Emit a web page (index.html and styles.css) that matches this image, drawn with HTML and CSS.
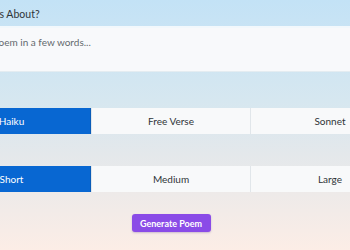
FILE: index.html
```html
<!DOCTYPE html>
<html lang="en">
<head>
    <meta charset="UTF-8">
    <title>Poem Generator</title>
    <link rel="stylesheet" href="styles.css">
</head>
<body>
<div class="page">
    <h2 class="title">What Is This About?</h2>
    <textarea class="topic" placeholder="Describe a poem in a few words..."></textarea>

    <p class="label">Style</p>
    <div class="group">
        <button class="opt active">Haiku</button>
        <button class="opt">Free Verse</button>
        <button class="opt">Sonnet</button>
    </div>

    <p class="label short">Length</p>
    <div class="group">
        <button class="opt active">Short</button>
        <button class="opt">Medium</button>
        <button class="opt">Large</button>
    </div>

    <div class="actions">
        <button class="generate">Generate Poem</button>
    </div>
</div>
</body>
</html>
```

FILE: styles.css
```css
*{
    margin: 0;
    padding: 0;
    box-sizing: border-box;
}
body{
    height: 250px;
    overflow: hidden;
    font-family: Lato, "Open Sans", sans-serif;
    color: #333;
    background: linear-gradient(180deg, #c3e2f6 0%, #d6e7f0 40%, #e4e8eb 62%, #fcede6 100%);
}
.page{
    width: 476px;
    margin-left: -67px;
}
.title{
    padding-left: 14px;
    font-size: 10.5px;
    font-weight: 400;
    line-height: 29px;
    height: 26px;
    color: #2f3438;
}
.topic{
    display: block;
    width: 100%;
    height: 46px;
    padding: 8px 10px;
    border: 1px solid #e4ecf1;
    border-top: 2px solid #f2f8fc;
    background: #f8f9fb;
    font-family: inherit;
    font-size: 10px;
    color: #333;
    resize: none;
    outline: none;
}
.topic::placeholder{
    color: #63696e;
}
.label{
    font-size: 10px;
    line-height: 36px;
    height: 36px;
    color: #3a3f44;
}
.label.short{
    line-height: 32px;
    height: 32px;
}
.group{
    display: grid;
    grid-template-columns: 158px 159px 159px;
    height: 26px;
}
.opt{
    font-family: inherit;
    font-size: 10px;
    color: #2f3438;
    background: #f8f9fa;
    border: none;
    border-left: 1px solid #e1e6ea;
}
.opt:first-child{
    border-left: none;
}
.opt.active{
    background: #0867d2;
    color: #fff;
    border-right: 1px solid #0a5cb8;
}
.actions{
    display: flex;
    justify-content: center;
    padding-top: 22px;
}
.generate{
    width: 79px;
    height: 18px;
    border: none;
    border-radius: 3px;
    background: #8a4be7;
    color: #fff;
    font-family: inherit;
    font-size: 9px;
    font-weight: 700;
    box-shadow: 0 1px 2px rgba(80, 40, 140, 0.25);
}
```
